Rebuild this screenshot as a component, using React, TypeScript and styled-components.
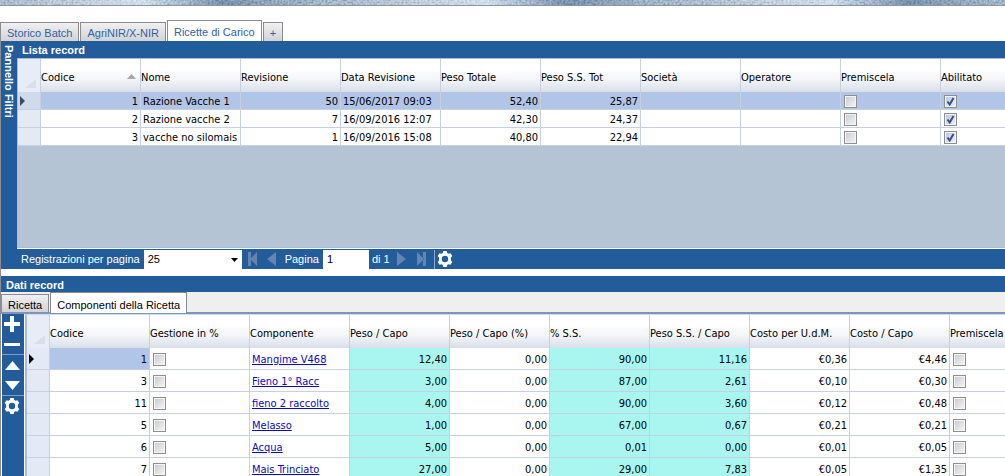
import React from 'react';
import styled, { createGlobalStyle, css } from 'styled-components';

const BLUE = '#235c9b';
const LINE = '#c6d0de';
const ui = '"Liberation Sans", Arial, sans-serif';
const grid = 'Tahoma, "DejaVu Sans Condensed", "DejaVu Sans", sans-serif';

const GlobalStyle = createGlobalStyle`
  * { box-sizing: border-box; }
  body { margin: 0; background: #fff; color: #000; font: 11px/14px ${ui}; }
  button, input, select { font: inherit; color: inherit; margin: 0; border-radius: 0; }
`;

const Page = styled.div`
  display: flex;
  flex-direction: column;
  height: 100vh;
  overflow: hidden;
`;

const Banner = styled.svg`
  display: block;
  flex: none;
  width: 100%;
  height: 6px;
  border-bottom: 1px solid #8f969e;
`;

const Workspace = styled.main`
  display: flex;
  flex-direction: column;
  flex: 1;
  min-height: 0;
`;

const MainTabs = styled.nav`
  display: flex;
  align-items: flex-end;
  flex: none;
  gap: 1px;
  height: 35px;
`;

const MainTab = styled.button<{ $active?: boolean }>`
  height: ${(p) => (p.$active ? 21 : 19)}px;
  padding: 2px 6px 0;
  border: 1px solid #8b8b93;
  border-bottom: 0;
  background: ${(p) => (p.$active ? '#fff' : 'linear-gradient(#f0f0f1, #d3d2d6)')};
  color: #2f62a4;
  line-height: 16px;
  white-space: nowrap;
`;

const Body = styled.div`
  display: flex;
  flex-direction: column;
  flex: 1;
  min-height: 0;
  border-left: 1px solid #8d8d92;
`;

const ListPanel = styled.section`
  display: flex;
  flex: none;
  margin-bottom: 7px;
`;

const FilterToggle = styled.button`
  flex: none;
  width: 16px;
  padding: 4px 0 0;
  border: 0;
  background: ${BLUE};
  color: #fff;
  font-weight: bold;
  line-height: 16px;
  text-align: left;
  writing-mode: vertical-rl;
`;

const ListMain = styled.div`
  flex: 1;
  min-width: 0;
`;

const TitleBar = styled.h2<{ $inset?: boolean }>`
  flex: none;
  height: ${(p) => (p.$inset ? 17 : 16)}px;
  margin: 0;
  padding-left: 5px;
  background: ${BLUE};
  color: #fff;
  font-size: 11px;
  line-height: 18px;
`;

const GridView = styled.div`
  height: 190px;
  overflow: hidden;
  border: 1px solid #a9bcd8;
  border-right: 0;
  background: #b5c4d5;
`;

const Table = styled.table`
  width: 100%;
  border-collapse: separate;
  border-spacing: 0;
  table-layout: fixed;
  font-family: ${grid};
`;

const Col = styled.col<{ $w?: number }>`
  width: ${(p) => (p.$w ? `${p.$w}px` : 'auto')};
`;

const Th = styled.th`
  height: 33px;
  padding: 4px 0 0;
  border-left: 1px solid ${LINE};
  background: linear-gradient(#fff 30%, #f4f6f9 60%, #d8dfe9);
  font-weight: normal;
  text-align: left;
  white-space: nowrap;
`;

const CornerTh = styled.th`
  padding: 0 4px 4px 0;
  background: #e6edf7;
  text-align: right;
  vertical-align: bottom;
  svg { display: block; margin-left: auto; }
`;

const SortLabel = styled.div`
  display: flex;
  justify-content: space-between;
  padding-right: 4px;
  svg { margin-top: 3px; }
`;

const Tr = styled.tr<{ $selected?: boolean; $h: number }>`
  background: ${(p) => (p.$selected ? '#b1c5e8' : '#fff')};
  height: ${(p) => p.$h}px;
`;

const Td = styled.td<{ $num?: boolean; $bg?: string }>`
  padding: 2px 2px 0;
  border-left: 1px solid ${LINE};
  border-bottom: 1px solid ${LINE};
  text-align: ${(p) => (p.$num ? 'right' : 'left')};
  white-space: nowrap;
  overflow: hidden;
  ${(p) => p.$bg && css`background: ${p.$bg};`}
`;

const RowHead = styled.td<{ $plain?: boolean }>`
  padding: 0 0 0 2px;
  border-bottom: 1px solid ${LINE};
  background: ${(p) => (p.$plain ? '#e3eaf6' : '#cfdbed')};
  svg { display: block; }
`;

const Check = styled.input`
  display: block;
  appearance: none;
  width: 13px;
  height: 13px;
  margin: 0 0 0 1px;
  border: 1px solid #8e8f8f;
  box-shadow: inset 0 0 0 1px #f4f4f4;
  background: linear-gradient(135deg, #c5c9cf, #f6f6f6);
  &:checked {
    background: url("data:image/svg+xml,%3Csvg xmlns='http://www.w3.org/2000/svg' viewBox='0 0 11 11'%3E%3Cpath d='M2.5 5.5 4.7 8.5 8.5 2' fill='none' stroke='%23354f86' stroke-width='2'/%3E%3C/svg%3E") center / 11px 11px no-repeat,
      linear-gradient(135deg, #b6c4dc, #f1f4fa);
  }
`;

const Link = styled.a`
  color: #0a0ac0;
  text-decoration: underline;
`;

const Pager = styled.form`
  display: flex;
  align-items: center;
  height: 21px;
  border-top: 1px solid #fff;
  background: ${BLUE};
  color: #fff;
`;

const PageSizeLabel = styled.label`
  display: flex;
  align-items: center;
  gap: 4px;
  padding-left: 4px;
`;

const SelectBox = styled.span`
  position: relative;
  display: block;
  width: 98px;
  svg { position: absolute; right: 4px; top: 8px; pointer-events: none; }
`;

const Select = styled.select`
  display: block;
  appearance: none;
  width: 100%;
  height: 19px;
  padding: 0 4px;
  border: 0;
  background: #fff;
  color: #000;
`;

const PageLabel = styled.label`
  display: flex;
  align-items: center;
  gap: 4px;
  margin-left: 9px;
`;

const PageInput = styled.input`
  width: 46px;
  height: 19px;
  padding: 0 4px;
  border: 0;
  background: #fff;
  color: #000;
`;

const PageCount = styled.span`
  margin: 0 7px 0 3px;
`;

const IconButton = styled.button<{ $gap?: number; $divided?: boolean }>`
  display: flex;
  align-items: center;
  height: 19px;
  margin-left: ${(p) => p.$gap ?? 0}px;
  padding: 0 0 0 ${(p) => (p.$divided ? 2 : 0)}px;
  border: 0;
  border-left: ${(p) => (p.$divided ? '1px solid #8fa9cd' : '0')};
  background: none;
`;

const DetailPanel = styled.section`
  display: flex;
  flex-direction: column;
  flex: 1;
  min-height: 0;
`;

const DetailTabs = styled.nav`
  display: flex;
  align-items: flex-end;
  gap: 1px;
  flex: none;
  height: 22px;
  border-bottom: 2px solid #7f93bd;
  background: #f0eff0;
`;

const DetailTab = styled.button<{ $active?: boolean }>`
  height: ${(p) => (p.$active ? 21 : 18)}px;
  margin-bottom: ${(p) => (p.$active ? -1 : 0)}px;
  padding: 3px 6px 0;
  border: 1px solid #8b8b93;
  border-bottom: 0;
  background: ${(p) => (p.$active ? '#fff' : 'linear-gradient(#f0f0f1, #d3d2d6)')};
  line-height: 14px;
  white-space: nowrap;
`;

const DetailBody = styled.div`
  display: flex;
  flex: 1;
  min-height: 0;
  padding-left: 1px;
`;

const ToolRail = styled.div`
  display: flex;
  flex-direction: column;
  flex: none;
  width: 23px;
  border-right: 1px solid #fff;
  background: ${BLUE};
`;

const RailButton = styled.button<{ $divided?: boolean }>`
  display: flex;
  align-items: center;
  justify-content: center;
  height: ${(p) => (p.$divided ? 21 : 20)}px;
  padding: 0 2px 0 0;
  border: 0;
  border-top: ${(p) => (p.$divided ? '1px solid #7d9cc6' : '0')};
  background: none;
`;

const DetailGrid = styled.div`
  flex: 1;
  min-width: 0;
  overflow: hidden;
  border-top: 1px solid #cddcee;
  border-left: 2px solid #a9bcd8;
`;

const Gear = () => (
  <svg width="16" height="16" viewBox="0 0 16 16">
    <path
      fill="#fff"
      fillRule="evenodd"
      d="M6.3 0h3.4l.5 2.1 1.3.7 2-.6 1.8 2.9L13.9 6.6v2.8l1.4 1.5-1.8 2.9-2-.6-1.3.7-.5 2.1H6.3l-.5-2.1-1.3-.7-2 .6L.7 10.9l1.4-1.5V6.6L.7 5.1l1.8-2.9 2 .6 1.3-.7zM8 4.8a3.2 3.2 0 1 0 0 6.4 3.2 3.2 0 0 0 0-6.4z"
    />
  </svg>
);

const Corner = () => (
  <svg width="11" height="9"><path d="M11 0V9H0z" fill="#d8dfe8" /></svg>
);

const RowArrow = ({ color }: { color: string }) => (
  <svg width="6" height="10"><path d="M0 0 5 5 0 10z" fill={color} /></svg>
);

const Arrow = ({ back, bar }: { back?: boolean; bar?: boolean }) => (
  <svg width="9" height="14" viewBox="0 0 9 14" fill="#6485b0">
    {back ? (
      <path d={bar ? 'M0 0h3v14H0zM9 0v14L2 7z' : 'M9 0v14L0 7z'} />
    ) : (
      <path d={bar ? 'M6 0h3v14H6zM0 0v14L7 7z' : 'M0 0v14L9 7z'} />
    )}
  </svg>
);

const listColumns = ['Codice', 'Nome', 'Revisione', 'Data Revisione', 'Peso Totale', 'Peso S.S. Tot', 'Società', 'Operatore', 'Premiscela', 'Abilitato'];

const recipes = [
  { code: 1, name: 'Razione Vacche 1', rev: 50, date: '15/06/2017 09:03', total: '52,40', dry: '25,87' },
  { code: 2, name: 'Razione vacche 2', rev: 7, date: '16/09/2016 12:07', total: '42,30', dry: '24,37' },
  { code: 3, name: 'vacche no silomais', rev: 1, date: '16/09/2016 15:08', total: '40,80', dry: '22,94' },
];

const detailColumns = ['Codice', 'Gestione in %', 'Componente', 'Peso / Capo', 'Peso / Capo (%)', '% S.S.', 'Peso S.S. / Capo', 'Costo per U.d.M.', 'Costo / Capo', 'Premiscela'];

const AQUA = '#a9f5ef';

const components = [
  [1, 'Mangime V468', '12,40', '0,00', '90,00', '11,16', '€0,36', '€4,46'],
  [3, 'Fieno 1° Racc', '3,00', '0,00', '87,00', '2,61', '€0,10', '€0,30'],
  [11, 'fieno 2 raccolto', '4,00', '0,00', '90,00', '3,60', '€0,12', '€0,48'],
  [5, 'Melasso', '1,00', '0,00', '67,00', '0,67', '€0,21', '€0,21'],
  [6, 'Acqua', '5,00', '0,00', '0,01', '0,00', '€0,01', '€0,05'],
  [7, 'Mais Trinciato', '27,00', '0,00', '29,00', '7,83', '€0,05', '€1,35'],
] as const;

const Columns = ({ names }: { names: string[] }) => (
  <colgroup>
    <Col $w={22} />
    {names.map((n, i) => <Col key={n} $w={i < names.length - 1 ? 100 : undefined} />)}
  </colgroup>
);

const RecipeTable = () => (
  <Table>
    <Columns names={listColumns} />
    <thead>
      <tr>
        <CornerTh><Corner /></CornerTh>
        {listColumns.map((name, i) => (
          <Th key={name}>
            {i === 0 ? (
              <SortLabel>
                {name}
                <svg width="9" height="5"><path d="M0 5 4.5 0 9 5z" fill="#a7a7a7" /></svg>
              </SortLabel>
            ) : name}
          </Th>
        ))}
      </tr>
    </thead>
    <tbody>
      {recipes.map((r, i) => (
        <Tr key={r.code} $h={18} $selected={i === 0}>
          <RowHead $plain={i > 0}>{i === 0 && <RowArrow color="#3f4a5c" />}</RowHead>
          <Td $num>{r.code}</Td>
          <Td>{r.name}</Td>
          <Td $num>{r.rev}</Td>
          <Td>{r.date}</Td>
          <Td $num>{r.total}</Td>
          <Td $num>{r.dry}</Td>
          <Td />
          <Td />
          <Td><Check type="checkbox" aria-label={`Premiscela ${r.name}`} /></Td>
          <Td><Check type="checkbox" aria-label={`Abilitato ${r.name}`} defaultChecked /></Td>
        </Tr>
      ))}
    </tbody>
  </Table>
);

const ComponentTable = () => (
  <Table>
    <Columns names={detailColumns} />
    <thead>
      <tr>
        <CornerTh><Corner /></CornerTh>
        {detailColumns.map((name) => <Th key={name}>{name}</Th>)}
      </tr>
    </thead>
    <tbody>
      {components.map(([code, name, weight, pct, dryPct, dryWeight, unit, cost], i) => (
        <Tr key={code} $h={22}>
          <RowHead $plain>{i === 0 && <RowArrow color="#000" />}</RowHead>
          <Td $num $bg={i === 0 ? '#b1c5e8' : undefined}>{code}</Td>
          <Td><Check type="checkbox" aria-label={`Gestione in % ${name}`} /></Td>
          <Td><Link href="#">{name}</Link></Td>
          <Td $num $bg={AQUA}>{weight}</Td>
          <Td $num>{pct}</Td>
          <Td $num $bg={AQUA}>{dryPct}</Td>
          <Td $num $bg={AQUA}>{dryWeight}</Td>
          <Td $num>{unit}</Td>
          <Td $num>{cost}</Td>
          <Td><Check type="checkbox" aria-label={`Premiscela ${name}`} /></Td>
        </Tr>
      ))}
    </tbody>
  </Table>
);

export default function App() {
  return (
    <Page>
      <GlobalStyle />
      <Banner aria-hidden="true">
        <defs>
          <filter id="grain" x="0" y="0" width="100%" height="100%">
            <feTurbulence type="fractalNoise" baseFrequency="0.5" numOctaves="3" />
            <feColorMatrix values="1.4 0 0 0 -0.15 1.4 0 0 0 -0.06 1.4 0 0 0 0.04 0 0 0 0 1" />
          </filter>
          <linearGradient id="sheen" gradientUnits="userSpaceOnUse" x1="145" x2="488" y1="0" y2="0" spreadMethod="repeat">
            <stop offset="0" stopColor="#d3e4f3" stopOpacity="0.7" />
            <stop offset="0.1" stopColor="#8fa9c6" stopOpacity="0.5" />
            <stop offset="0.22" stopColor="#456689" stopOpacity="0.6" />
            <stop offset="0.5" stopColor="#8299b4" stopOpacity="0.5" />
            <stop offset="0.8" stopColor="#bccbdb" stopOpacity="0.6" />
            <stop offset="1" stopColor="#d3e4f3" stopOpacity="0.7" />
          </linearGradient>
        </defs>
        <rect width="100%" height="100%" filter="url(#grain)" />
        <rect width="100%" height="100%" fill="url(#sheen)" />
      </Banner>
      <Workspace>
        <MainTabs>
          <MainTab>Storico Batch</MainTab>
          <MainTab>AgriNIR/X-NIR</MainTab>
          <MainTab $active>Ricette di Carico</MainTab>
          <MainTab>+</MainTab>
        </MainTabs>
        <Body>
          <ListPanel>
            <FilterToggle>Pannello Filtri</FilterToggle>
            <ListMain>
              <TitleBar $inset>Lista record</TitleBar>
              <GridView><RecipeTable /></GridView>
              <Pager onSubmit={(e) => e.preventDefault()}>
                <PageSizeLabel>
                  Registrazioni per pagina
                  <SelectBox>
                    <Select defaultValue="25">
                      <option>25</option>
                      <option>50</option>
                    </Select>
                    <svg width="7" height="4"><path d="M0 0h7L3.5 4z" /></svg>
                  </SelectBox>
                </PageSizeLabel>
                <IconButton type="button" aria-label="Prima pagina" $gap={6}><Arrow back bar /></IconButton>
                <IconButton type="button" aria-label="Pagina precedente" $gap={10}><Arrow back /></IconButton>
                <PageLabel>
                  Pagina
                  <PageInput defaultValue="1" />
                </PageLabel>
                <PageCount>di 1</PageCount>
                <IconButton type="button" aria-label="Pagina successiva"><Arrow /></IconButton>
                <IconButton type="button" aria-label="Ultima pagina" $gap={11}><Arrow bar /></IconButton>
                <IconButton type="button" aria-label="Impostazioni" $gap={8} $divided><Gear /></IconButton>
              </Pager>
            </ListMain>
          </ListPanel>
          <DetailPanel>
            <TitleBar>Dati record</TitleBar>
            <DetailTabs>
              <DetailTab>Ricetta</DetailTab>
              <DetailTab $active>Componenti della Ricetta</DetailTab>
            </DetailTabs>
            <DetailBody>
              <ToolRail>
                <RailButton aria-label="Aggiungi">
                  <svg width="16" height="16"><path d="M6 0h4v6h6v4h-6v6H6v-6H0V6h6z" fill="#fff" /></svg>
                </RailButton>
                <RailButton aria-label="Rimuovi">
                  <svg width="16" height="3"><path d="M0 0h16v3H0z" fill="#fff" /></svg>
                </RailButton>
                <RailButton aria-label="Sposta su" $divided>
                  <svg width="15" height="9"><path d="M0 9 7.5 0 15 9z" fill="#fff" /></svg>
                </RailButton>
                <RailButton aria-label="Sposta giù">
                  <svg width="15" height="9"><path d="M0 0h15L7.5 9z" fill="#fff" /></svg>
                </RailButton>
                <RailButton aria-label="Impostazioni" $divided><Gear /></RailButton>
              </ToolRail>
              <DetailGrid><ComponentTable /></DetailGrid>
            </DetailBody>
          </DetailPanel>
        </Body>
      </Workspace>
    </Page>
  );
}
